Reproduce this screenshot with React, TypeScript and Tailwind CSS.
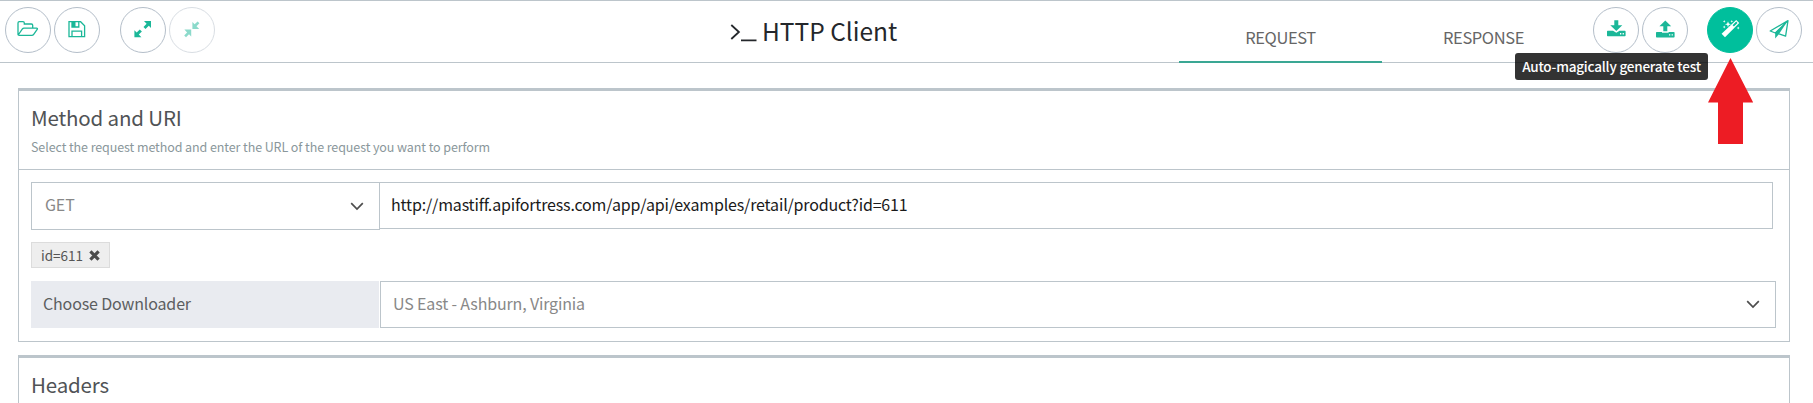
import type { ReactNode } from "react";

type CircleButtonProps = {
  label: string;
  active?: boolean;
  disabled?: boolean;
  children: ReactNode;
};

function CircleButton({ label, active, disabled, children }: CircleButtonProps) {
  return (
    <button
      aria-label={label}
      disabled={disabled}
      className={
        "flex size-[46px] items-center justify-center rounded-full border " +
        (active
          ? "border-[#00bf9c] bg-[#00bf9c] text-white"
          : "border-[#b4bec9] bg-white text-[#1bb798]") +
        (disabled ? " opacity-50" : "")
      }
    >
      <svg width="24" height="24" viewBox="0 0 24 24" fill="currentColor">
        {children}
      </svg>
    </button>
  );
}

function Chevron() {
  return (
    <svg width="14" height="9" viewBox="0 0 14 9" fill="none" stroke="#4d4d4d" strokeWidth="1.7">
      <path d="M1.2 1.2 7 7l5.8-5.8" />
    </svg>
  );
}

function Header() {
  return (
    <header className="relative flex h-[63px] border-y border-[#bcc5cb]">
      <div className="flex w-[730px] pl-[5px] pt-[6px]">
        <div className="flex gap-[3px]">
          <CircleButton label="Open">
            <path
              d="M2 16.6V4.9Q2 3.6 3.3 3.6H7Q8.3 3.6 8.3 4.9V6H15.4Q16.7 6 16.7 7.3V10M2.2 17 6.4 11Q7 10.2 8 10.2H20.5Q22 10.2 21.2 11.3L17.7 16.3Q17 17.4 15.8 17.4H3.3Q2 17.4 2 16.2"
              fill="none"
              stroke="currentColor"
              strokeWidth="1.3"
            />
          </CircleButton>
          <CircleButton label="Save">
            <path
              d="M4 3.7H15.6L19.6 7.7V18.7H4ZM7 18.7V13.2H16.6V18.7M7 3.7V9H13.8V3.7"
              fill="none"
              stroke="currentColor"
              strokeWidth="1.3"
            />
            <path d="M7 3.7h3.5V9H7z" />
          </CircleButton>
        </div>
        <div className="ml-[20px] flex gap-[3px]">
          <CircleButton label="Expand">
            <path d="M13 3H20V10L17.8 7.8 14.5 11.1 12.5 9.1 15.6 5.8ZM10.4 19.2H3.4V12.2L5.7 14.5 8.8 11.4 10.9 13.4 7.8 16.6Z" />
          </CircleButton>
          <CircleButton label="Collapse" disabled>
            <path d="M12.4 11V4.1L14.6 6.3 17.6 3.4 19.4 5.2 16.5 8.2 19.2 11ZM11.2 11.6V18.5L9 16.3 6 19.2 4.2 17.4 7.1 14.4 4.4 11.6Z" />
          </CircleButton>
        </div>
      </div>

      <div className="flex w-[449px] text-[#24272b]">
        <svg className="mt-[21px]" width="28" height="22" viewBox="0 0 28 22" fill="none" stroke="currentColor" strokeWidth="1.8">
          <path d="M1.3 3 8.9 10 1.3 17M11 18.3H26.5" />
        </svg>
        <h1 className="ml-[4px] mt-[12px] text-[24.5px] leading-9">HTTP Client</h1>
      </div>

      <nav className="flex h-[62px] text-[16.5px] tracking-[-0.4px] text-[#666]">
        <a className="flex w-[203px] justify-center border-b-2 border-[#3aa794] pt-[24px] leading-6">REQUEST</a>
        <a className="flex w-[203px] justify-center pt-[24px] leading-6">RESPONSE</a>
      </nav>

      <div className="ml-[8px] flex pt-[6px]">
        <div className="flex gap-[3px]">
          <CircleButton label="Import">
            <path d="M10.3 2.2h4v5h4L12.3 13 6.3 7.2h4zM3.7 12.8H9l3.3 2 3.3-2h5.3q.7 0 .7.7v4q0 .7-.7.7H3.7q-.7 0-.7-.7v-4q0-.7.7-.7zM16 15v1.4h1.3V15zM18.6 15v1.4h1.3V15z" fillRule="evenodd" />
          </CircleButton>
          <CircleButton label="Export">
            <path d="M12.3 2.6 18.2 8.3H14.3V13.2H10.3V8.3H6.4zM3.7 14H9v.8h6.6V14h5.3q.7 0 .7.7v4q0 .7-.7.7H3.7q-.7 0-.7-.7v-4q0-.7.7-.7zM16 16.3v1.3h1.3v-1.3zM18.6 16.3v1.3h1.3v-1.3z" fillRule="evenodd" />
          </CircleButton>
        </div>
        <div className="ml-[19px] flex gap-[3px]">
          <CircleButton label="Generate test" active>
            <path d="M18.2 2 21.2 5 7 19.2 3.6 15.8zM18.2 3.6 14.6 7.2 15.9 8.5 19.5 4.9z" fillRule="evenodd" />
            <path d="m10 3.2.8 2.2 2.2.8-2.2.8-.8 2.2L9.2 7 7 6.2l2.2-.8zM6.2 1.9l.4 1 1 .4-1 .4-.4 1-.4-1-1-.4 1-.4zM13.8 1.9l.4 1 1 .4-1 .4-.4 1-.4-1-1-.4 1-.4zM6.2 7.6l.4 1 1 .4-1 .4-.4 1-.4-1-1-.4 1-.4zM20.2 8.6l.4 1 1 .4-1 .4-.4 1-.4-1-1-.4 1-.4z" />
          </CircleButton>
          <CircleButton label="Send">
            <path
              d="M21 2.6 3.2 13 8.4 15 21 2.6 18.6 18.2 12 15.8"
              fill="none"
              stroke="currentColor"
              strokeWidth="1.3"
              strokeLinejoin="round"
            />
            <path d="M21 2.6 8.2 14.6v6l3.6-4.4z" />
          </CircleButton>
        </div>
      </div>

      <div className="absolute left-[1515px] top-[52px] h-[27px] w-[193px] rounded-[3px] bg-black/80 text-center text-[13.5px] font-medium leading-[27px] tracking-[-0.2px] text-white">
        Auto-magically generate test
      </div>
      <svg className="absolute left-[1707px] top-[57px]" width="47" height="87" viewBox="0 0 47 87" fill="#ed1c24">
        <path d="M23.5 0 46.2 44.5H36V85.5Q36 86 35.5 86H11.5Q11 86 11 85.5V44.5H1Z" />
      </svg>
    </header>
  );
}

function MethodPanel() {
  return (
    <section className="h-[254px] border border-t-3 border-[#bcc5cb]">
      <div className="h-[79px] border-b border-[#bcc5cb] pl-[12px] pt-[11px]">
        <h2 className="text-[20.5px] leading-[30px] tracking-[-0.15px] text-[#505356]">Method and URI</h2>
        <p className="mt-[5px] text-[12.5px] leading-5 tracking-[-0.09px] text-[#8a979b]">
          Select the request method and enter the URL of the request you want to perform
        </p>
      </div>
      <div className="pl-[12px] pt-[12px]">
        <div className="flex items-start">
          <div className="flex h-[48px] w-[349px] items-center justify-between border border-[#bcc5cb] pl-[13px] pr-[15px] text-[16px] tracking-[-0.15px] text-[#888]">
            <span className="-mt-[4px]">GET</span>
            <Chevron />
          </div>
          <input
            className="-ml-px h-[47px] w-[1394px] border border-[#bcc5cb] pb-[4px] pl-[11px] text-[16px] tracking-[-0.17px] text-[#1a1a1a] outline-none"
            defaultValue="http://mastiff.apifortress.com/app/api/examples/retail/product?id=611"
          />
        </div>
        <div className="mt-[12px] flex h-[26px] w-[79px] items-center border border-[#dcdcdc] bg-[#eee] pl-[9px] text-[13.5px] text-[#555]">
          <span>id=611</span>
          <svg className="ml-[6px]" width="11" height="11" viewBox="0 0 11 11" stroke="#4d4d4d" strokeWidth="3.2">
            <path d="M1.4 1.4 9.6 9.6M9.6 1.4 1.4 9.6" />
          </svg>
        </div>
        <div className="mt-[13px] flex h-[47px] text-[16px] tracking-[-0.15px]">
          <div className="flex w-[348px] items-center bg-[#e9ebf0] pb-[4px] pl-[12px] text-[#5c5e60]">Choose Downloader</div>
          <div className="ml-px flex w-[1396px] items-center justify-between border border-[#bcc5cb] pl-[12px] pr-[15px] text-[#888]">
            <span className="-mt-[4px]">US East - Ashburn, Virginia</span>
            <Chevron />
          </div>
        </div>
      </div>
    </section>
  );
}

export default function App() {
  return (
    <div className="h-[403px] w-[1813px] overflow-hidden bg-white font-['Noto_Sans_CJK_SC','Noto_Sans',sans-serif]">
      <Header />
      <main className="ml-[18px] mt-[25px] w-[1772px]">
        <MethodPanel />
        <section className="mt-[13px] h-[60px] border border-t-3 border-[#bcc5cb] pl-[12px] pt-[11px]">
          <h2 className="text-[20.5px] leading-[30px] tracking-[-0.15px] text-[#505356]">Headers</h2>
        </section>
      </main>
    </div>
  );
}
